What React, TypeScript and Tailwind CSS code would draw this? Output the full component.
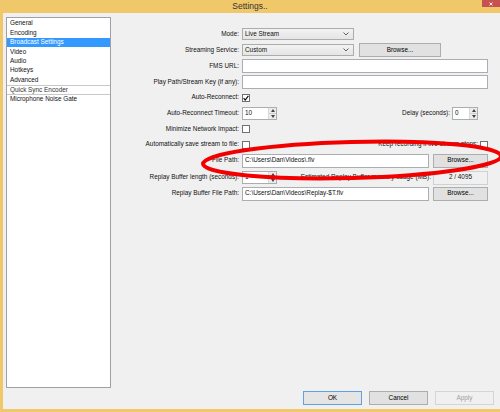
import type { ReactNode } from "react"

const categories = ["General", "Encoding", "Broadcast Settings", "Video", "Audio", "Hotkeys", "Advanced"]

function Chevron() {
  return (
    <svg width="6" height="4" viewBox="0 0 6 4" className="shrink-0">
      <polyline points="0.5,0.5 3,3 5.5,0.5" fill="none" stroke="#555" strokeWidth="0.9" />
    </svg>
  )
}

function Select({ value }: { value: string }) {
  return (
    <div className="w-[112px] h-[12px] border border-[#acacac] bg-gradient-to-b from-[#f2f2f2] to-[#e5e5e5] flex items-center justify-between pl-[2px] pr-[4px]">
      <span>{value}</span>
      <Chevron />
    </div>
  )
}

function TextBox({ value = "", wide }: { value?: string; wide?: boolean }) {
  return (
    <div
      className={`h-[14px] border border-[#abadb3] bg-white flex items-center pl-[2px] ${
        wide ? "w-[246px]" : "w-[187px]"
      }`}
    >
      {value}
    </div>
  )
}

function Spin({ value, small }: { value: string; small?: boolean }) {
  return (
    <div
      className={`h-[13px] border border-[#abadb3] bg-white flex ${small ? "w-[26px]" : "w-[35px]"}`}
    >
      <div className="flex-1 pl-[2px] flex items-center">{value}</div>
      <div className="w-[8px] flex flex-col border-l border-[#d9d9d9]">
        <div className="flex-1 bg-[#ececec] border-b border-[#cfcfcf] flex items-center justify-center">
          <svg width="4" height="3" viewBox="0 0 4 3">
            <polygon points="0,3 2,0 4,3" fill="#444" />
          </svg>
        </div>
        <div className="flex-1 bg-[#ececec] flex items-center justify-center">
          <svg width="4" height="3" viewBox="0 0 4 3">
            <polygon points="0,0 4,0 2,3" fill="#444" />
          </svg>
        </div>
      </div>
    </div>
  )
}

function Check({ checked }: { checked?: boolean }) {
  return (
    <div className="w-[8px] h-[8px] border border-[#707070] bg-white flex items-center justify-center">
      {checked && (
        <svg width="6" height="6" viewBox="0 0 6 6">
          <polyline points="0.6,3.2 2.2,5 5.4,0.8" fill="none" stroke="#111" strokeWidth="1.2" />
        </svg>
      )}
    </div>
  )
}

function Btn({ children, w, kind }: { children: ReactNode; w: string; kind?: "default" | "disabled" }) {
  const look =
    kind === "default"
      ? "border-[#5ea2e6] bg-[#e5e5e5] text-black"
      : kind === "disabled"
        ? "border-[#d5d5d5] bg-[#f0f0f0] text-[#a0a0a0]"
        : "border-[#adadad] bg-[#e1e1e1] text-black"
  return <div className={`h-[14px] border flex items-center justify-center ${w} ${look}`}>{children}</div>
}

function Row({ label, h, children }: { label: string; h: string; children?: ReactNode }) {
  return (
    <div className={`flex items-center ${h}`}>
      <div className="w-[129px] shrink-0 text-right pr-[1px]">{label}</div>
      <div className="ml-[2px] w-[246px] flex items-center">{children}</div>
    </div>
  )
}

export default function App() {
  return (
    <div className="relative w-[500px] h-[412px] bg-[#f0c86a] flex flex-col font-['Liberation_Sans',Arial,sans-serif] text-[6.4px] leading-none text-[#111] overflow-hidden">
      {/* title bar */}
      <div className="relative h-[13px] shrink-0 flex items-center justify-center">
        <span className="text-[8.5px] text-[#333] -mt-[1px]">Settings..</span>
        <div className="absolute right-0 top-0 w-[18px] h-[7px] bg-[#c75050] flex items-center justify-center">
          <svg width="4" height="4" viewBox="0 0 4 4">
            <path d="M0.5 0.5 L3.5 3.5 M3.5 0.5 L0.5 3.5" stroke="#fff" strokeWidth="0.9" />
          </svg>
        </div>
      </div>

      {/* client area */}
      <div className="ml-[3px] h-[396px] bg-[#f0f0f0] flex flex-col">
        <div className="flex h-[375px]">
          {/* category list */}
          <div className="ml-[3px] mt-[4px] w-[105px] h-[371px] bg-white border border-[#a0a0a8] pt-[1px]">
            {categories.map((c) => (
              <div
                key={c}
                className={`h-[9.4px] flex items-center pl-[3px] ${
                  c === "Broadcast Settings" ? "bg-[#3399ff] text-white" : ""
                }`}
              >
                {c}
              </div>
            ))}
            <div className="h-[10px] flex items-center pl-[3px] border-y border-[#c8c8c8] text-[#333]">
              Quick Sync Encoder
            </div>
            <div className="h-[9.4px] flex items-center pl-[3px]">Microphone Noise Gate</div>
          </div>

          {/* broadcast settings form */}
          <div className="flex flex-col pt-[13px]">
            <Row label="Mode:" h="h-[16px]">
              <Select value="Live Stream" />
            </Row>
            <Row label="Streaming Service:" h="h-[16px]">
              <Select value="Custom" />
              <div className="ml-[5px]">
                <Btn w="w-[82px]">Browse...</Btn>
              </div>
            </Row>
            <Row label="FMS URL:" h="h-[16px]">
              <TextBox wide />
            </Row>
            <Row label="Play Path/Stream Key (if any):" h="h-[16px]">
              <TextBox wide />
            </Row>
            <Row label="Auto-Reconnect:" h="h-[15px]">
              <Check checked />
            </Row>
            <Row label="Auto-Reconnect Timeout:" h="h-[16px]">
              <Spin value="10" />
              <div className="ml-auto mr-[10px] flex items-center gap-[2px]">
                <span>Delay (seconds):</span>
                <Spin value="0" small />
              </div>
            </Row>
            <Row label="Minimize Network Impact:" h="h-[16px]">
              <Check />
            </Row>
            <Row label="Automatically save stream to file:" h="h-[15px]">
              <Check />
              <div className="ml-auto flex items-center gap-[2px]">
                <span>Keep recording if live stream stops:</span>
                <Check />
              </div>
            </Row>
            <Row label="File Path:" h="h-[17px]">
              <TextBox value="C:\Users\Dan\Videos\.flv" />
              <div className="ml-auto">
                <Btn w="w-[55px]">Browse...</Btn>
              </div>
            </Row>
            <Row label="Replay Buffer length (seconds):" h="h-[17px]">
              <Spin value="1" />
              <div className="ml-auto flex items-center gap-[2px]">
                <span>Estimated Replay Buffer memory usage (MB):</span>
                <div className="w-[55px] h-[14px] border border-[#d0d0d0] bg-[#f0f0f0] flex items-center justify-center">
                  2 / 4095
                </div>
              </div>
            </Row>
            <Row label="Replay Buffer File Path:" h="h-[15px]">
              <TextBox value="C:\Users\Dan\Videos\Replay-$T.flv" />
              <div className="ml-auto">
                <Btn w="w-[55px]">Browse...</Btn>
              </div>
            </Row>
          </div>
        </div>

        {/* dialog buttons */}
        <div className="mt-[3px] flex justify-end gap-[7px] pr-[6px]">
          <Btn w="w-[59px]" kind="default">OK</Btn>
          <Btn w="w-[59px]">Cancel</Btn>
          <Btn w="w-[59px]" kind="disabled">Apply</Btn>
        </div>
      </div>

      {/* red annotation ring */}
      <svg className="absolute left-0 top-0 pointer-events-none" width="500" height="412">
        <ellipse
          cx="352"
          cy="160"
          rx="149"
          ry="18"
          transform="rotate(-1.5 352 160)"
          fill="none"
          stroke="#f20000"
          strokeWidth="4"
        />
      </svg>
    </div>
  )
}
